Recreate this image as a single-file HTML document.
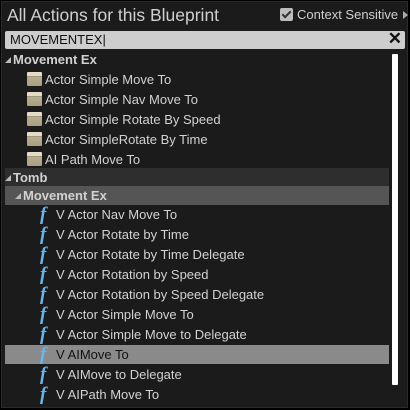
<!DOCTYPE html>
<html><head><meta charset="utf-8"><style>
*{margin:0;padding:0;box-sizing:border-box}
html,body{width:410px;height:410px;overflow:hidden;background:#000}
body{font-family:"Liberation Sans",sans-serif;position:relative}
.panel{position:absolute;left:1px;top:1px;width:407px;height:407px;background:#1b1b1b;border:1px solid #2a2a2a}
.title{position:absolute;left:7px;top:5px;font-size:17.5px;color:#d0d0d0}
.cs{position:absolute;left:280px;top:7px;font-size:13px;color:#cfcfcf;display:flex;align-items:center}
.cb{width:13px;height:13px;background:#bdbdbd;border-radius:2px;margin-right:4px;position:relative}
.cb:after{content:"";position:absolute;left:4px;top:1px;width:3px;height:7px;border:solid #333;border-width:0 2px 2px 0;transform:rotate(45deg)}
.arr{margin-left:5px;width:0;height:0;border-left:5px solid #aaa;border-top:4px solid transparent;border-bottom:4px solid transparent}
.search{position:absolute;left:5px;top:31px;width:400px;height:18px;background:#cdcdcd;border-radius:2px;font-size:13px;color:#111;padding-left:5px;line-height:18px}
.x{position:absolute;right:3px;top:-1px;font-size:17px;font-weight:bold;color:#111}
.sb{position:absolute;left:392px;top:54px;width:6px;height:331px;background:#fff;border-radius:1px}
.row{position:absolute;left:5px;width:384px;height:19px;font-size:13px;color:#d2d2d2;line-height:19px;white-space:nowrap}
.h{font-weight:bold}
.tri{display:inline-block;width:0;height:0;border-left:6px solid transparent;border-bottom:6px solid #bbb;margin-right:2px;vertical-align:1px}
.bp{display:inline-block;width:15px;height:14px;background:linear-gradient(#e4dcc4 0,#e4dcc4 4px,#8a8068 4px,#b8ad90 5px,#a89e80 100%);margin-right:3px;vertical-align:-2px;border-radius:1px}
.f{display:inline-block;width:14px;color:#62b8f2;font-family:"Liberation Serif",serif;font-style:italic;font-weight:bold;font-size:19px;margin-right:2px;line-height:19px;vertical-align:top}
</style></head><body>
<div class="panel"></div>
<div class="title">All Actions for this Blueprint</div>
<div class="cs"><div class="cb"></div>Context Sensitive<div class="arr"></div></div>
<div class="search">MOVEMENTEX|<span class="x">✕</span></div>
<div class="sb"></div>
<div class="row h" style="top:50px"><span class="tri"></span>Movement Ex</div>
<div class="row" style="top:70px;padding-left:22px"><span class="bp"></span>Actor Simple Move To</div>
<div class="row" style="top:90px;padding-left:22px"><span class="bp"></span>Actor Simple Nav Move To</div>
<div class="row" style="top:110px;padding-left:22px"><span class="bp"></span>Actor Simple Rotate By Speed</div>
<div class="row" style="top:130px;padding-left:22px"><span class="bp"></span>Actor SimpleRotate By Time</div>
<div class="row" style="top:150px;padding-left:22px"><span class="bp"></span>AI Path Move To</div>
<div class="row h" style="top:168px;background:#2e2e2e"><span class="tri"></span>Tomb</div>
<div class="row h" style="top:186px;background:#555;padding-left:10px"><span class="tri"></span>Movement Ex</div>
<div class="row" style="top:205px;padding-left:35px"><span class="f">f</span>V Actor Nav Move To</div>
<div class="row" style="top:225px;padding-left:35px"><span class="f">f</span>V Actor Rotate by Time</div>
<div class="row" style="top:245px;padding-left:35px"><span class="f">f</span>V Actor Rotate by Time Delegate</div>
<div class="row" style="top:265px;padding-left:35px"><span class="f">f</span>V Actor Rotation by Speed</div>
<div class="row" style="top:285px;padding-left:35px"><span class="f">f</span>V Actor Rotation by Speed Delegate</div>
<div class="row" style="top:305px;padding-left:35px"><span class="f">f</span>V Actor Simple Move To</div>
<div class="row" style="top:325px;padding-left:35px"><span class="f">f</span>V Actor Simple Move to Delegate</div>
<div class="row" style="top:345px;padding-left:35px;background:#8a8a8a;color:#111"><span class="f">f</span>V AIMove To</div>
<div class="row" style="top:365px;padding-left:35px"><span class="f">f</span>V AIMove to Delegate</div>
<div class="row" style="top:385px;padding-left:35px"><span class="f">f</span>V AIPath Move To</div>
</body></html>
